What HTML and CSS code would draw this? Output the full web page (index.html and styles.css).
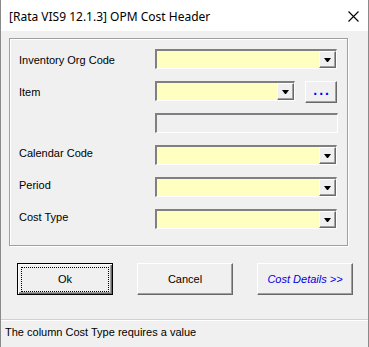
FILE: index.html
```html
<!DOCTYPE html>
<html>
  <head>
    <title>OPM Cost Header</title>
    <link rel="stylesheet" href="styles.css">
  </head>
  <body>
    <div class="window">
      <div class="titlebar">
        <span class="title">[Rata VIS9 12.1.3] OPM Cost Header</span>
        <svg class="close" width="11" height="11" viewBox="0 0 11 11">
          <path d="M0.5 0.5 L10.5 10.5 M10.5 0.5 L0.5 10.5" stroke="#000" stroke-width="1.1" fill="none"/>
        </svg>
      </div>
      <div class="client">
        <div class="group">
          <div class="label low">Inventory Org Code</div>
          <div class="combo"><span class="drop"></span></div>

          <div class="label low">Item</div>
          <div class="field-row">
            <div class="combo short"><span class="drop"></span></div>
            <button class="dots-btn"><span class="dots">...</span></button>
          </div>

          <div class="label"></div>
          <div class="textbox"></div>

          <div class="label">Calendar Code</div>
          <div class="combo"><span class="drop"></span></div>

          <div class="label">Period</div>
          <div class="combo"><span class="drop"></span></div>

          <div class="label">Cost Type</div>
          <div class="combo"><span class="drop"></span></div>
        </div>
        <div class="buttons">
          <button class="btn default">Ok</button>
          <button class="btn">Cancel</button>
          <button class="btn details">Cost Details &gt;&gt;</button>
        </div>
      </div>
      <div class="status">The column Cost Type requires a value</div>
    </div>
  </body>
</html>
```

FILE: styles.css
```css
body {
  margin: 0;
  background: #f0f0f0;
  font-family: "Liberation Sans", Arial, sans-serif;
  font-size: 11px;
  color: #000;
}

.window {
  width: 369px;
  height: 347px;
  box-sizing: border-box;
  border-left: 1px solid #8a8a8a;
  border-right: 1px solid #8a8a8a;
  display: flex;
  flex-direction: column;
  background: #f0f0f0;
}

.titlebar {
  height: 31px;
  flex: none;
  background: #fff;
  display: flex;
  align-items: center;
  justify-content: space-between;
  padding: 0 9px 0 8px;
}
.title {
  font-family: "Noto Sans", sans-serif;
  font-size: 12px;
  padding-top: 1px;
}
.close {
  margin-top: 1px;
}

.client {
  flex: 1;
  padding-top: 7px;
}

.group {
  width: 339px;
  height: 208px;
  margin-left: 8px;
  box-sizing: border-box;
  border: 1px solid #a0a0a0;
  box-shadow: inset 1px 1px #fff, 1px 1px #fff;
  padding: 10px 0 0 9px;
  display: grid;
  grid-template-columns: 136px 182px;
  grid-template-rows: repeat(6, 20px);
  row-gap: 12px;
}

.label {
  padding-top: 2px;
  white-space: nowrap;
}
.label.low {
  padding-top: 5px;
}

.field-row {
  display: flex;
  gap: 10px;
  align-items: flex-start;
}

.combo {
  height: 20px;
  box-sizing: border-box;
  border-top: 2px solid #808080;
  border-left: 2px solid #808080;
  border-right: 1px solid #fff;
  border-bottom: 1px solid #fff;
  background: #ffffc0;
  display: flex;
  justify-content: flex-end;
}
.combo.short {
  width: 142px;
}

.drop {
  width: 17px;
  height: 17px;
  box-sizing: border-box;
  background: #f0f0f0;
  border-top: 1px solid #fff;
  border-left: 1px solid #fff;
  border-right: 1px solid #696969;
  border-bottom: 1px solid #696969;
  box-shadow: inset -1px -1px #a0a0a0;
  display: flex;
  align-items: center;
  justify-content: center;
}
.drop::after {
  content: "";
  width: 1px;
  height: 0;
  border-left: 3px solid transparent;
  border-right: 3px solid transparent;
  border-top: 4px solid #000;
  margin-top: 1px;
  margin-right: 1px;
}

.textbox {
  height: 20px;
  box-sizing: border-box;
  border-top: 2px solid #808080;
  border-left: 2px solid #808080;
  border-right: 1px solid #fff;
  border-bottom: 1px solid #fff;
  background: #f0f0f0;
  width: 183px;
}

.dots-btn {
  width: 32px;
  height: 22px;
  padding: 0;
  box-sizing: border-box;
  background: #f0f0f0;
  border-top: 1px solid #fff;
  border-left: 1px solid #fff;
  border-right: 1px solid #696969;
  border-bottom: 1px solid #696969;
  box-shadow: inset -1px -1px #a0a0a0;
  display: flex;
  align-items: center;
  justify-content: center;
}
.dots {
  color: #0000ff;
  font-family: "Liberation Sans", Arial, sans-serif;
  font-weight: bold;
  font-size: 14px;
  letter-spacing: 2px;
  line-height: 1;
  margin-top: -4px;
  margin-left: 2px;
}

.buttons {
  display: flex;
  gap: 24px;
  margin: 17px 0 0 16px;
}

.btn {
  width: 96px;
  height: 32px;
  box-sizing: border-box;
  padding: 0;
  position: relative;
  font-family: "Liberation Sans", Arial, sans-serif;
  font-size: 11px;
  color: #000;
  background: #f0f0f0;
  border-top: 1px solid #fff;
  border-left: 1px solid #fff;
  border-right: 1px solid #696969;
  border-bottom: 1px solid #696969;
  box-shadow: inset -1px -1px #a0a0a0;
}
.btn.default {
  border: 1px solid #000;
  box-shadow: inset 1px 1px #fff, inset -1px -1px #696969, inset -2px -2px #a0a0a0;
}
.btn.default::after {
  content: "";
  position: absolute;
  top: 3px;
  left: 3px;
  right: 3px;
  bottom: 2px;
  border: 1px dotted #000;
}
.btn.details {
  color: #0000e0;
  font-style: italic;
}

.status {
  height: 28px;
  flex: none;
  box-sizing: border-box;
  border-top: 1px solid #d0d0d0;
  box-shadow: inset 0 1px #fff;
  padding: 6px 0 0 4px;
  font-size: 11px;
}
```
